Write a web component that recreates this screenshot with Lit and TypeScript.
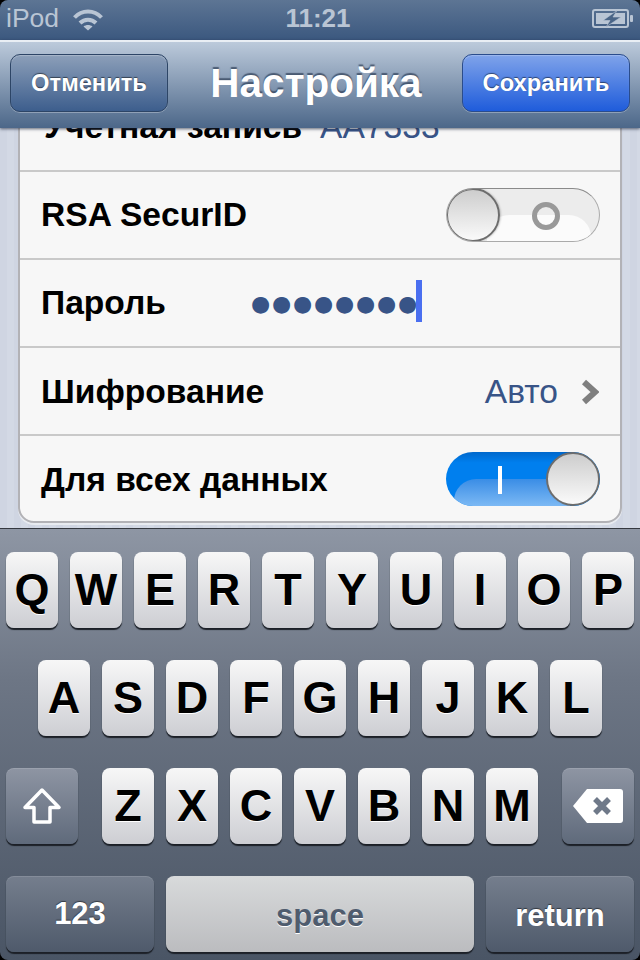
import { LitElement, html, css } from "lit";
import { customElement } from "lit/decorators.js";

@customElement("app-root")
class AppRoot extends LitElement {
  static styles = css`
    :host { display: block; width: 640px; height: 960px; background: #000; font-family: "Liberation Sans", Arial, sans-serif; }
    .screen { width: 640px; height: 960px; display: flex; flex-direction: column; overflow: hidden; border-radius: 8px; }
    .status { height: 40px; flex: none; box-sizing: border-box; display: flex; align-items: center; padding: 0 6px 3px; color: #b9c5d4; font-size: 26.5px; background: linear-gradient(#5d7594, #3b587f); }
    .carrier { width: 66px; }
    .wifi { width: 32px; height: 24px; }
    .time { flex: 1; text-align: center; font-weight: bold; font-size: 26px; padding-right: 60px; }
    .battery { width: 42px; height: 20px; }
    .nav { height: 88px; flex: none; box-sizing: border-box; border-top: 2px solid #e9eef4; padding: 12px 10px 0; display: flex; align-items: flex-start; justify-content: space-between; background: linear-gradient(#bccadb, #4c6789); box-shadow: 0 1px 3px rgba(30,40,60,.7); position: relative; z-index: 2; }
    .btn { height: 58px; box-sizing: border-box; display: flex; align-items: center; justify-content: center; border-radius: 10px; color: #fff; font-weight: bold; font-size: 23.7px; border: 1px solid #2d4566; box-shadow: 0 1px 0 rgba(255,255,255,.3), inset 0 1px 1px rgba(255,255,255,.25); text-shadow: 0 -1px 1px rgba(0,0,0,.5); }
    .cancel { width: 158px; background: linear-gradient(#8c9fb9, #3d5e8d); }
    .save { width: 168px; background: linear-gradient(#7fa3ea, #1f5cdb); border-color: #2a4c8c; }
    .title { color: #fff; font-weight: bold; font-size: 40.5px; line-height: 58px; margin-left: 2px; text-shadow: 0 -2px 1px rgba(50,65,90,.75); }
    .content { height: 400px; flex: none; overflow: hidden; box-sizing: border-box; padding: 0 18px; background: repeating-linear-gradient(90deg, #cfd5e2 0 7px, #d3d9e5 7px 14px); }
    .card { margin-top: -46px; height: 441px; box-sizing: border-box; background: #f7f7f7; border: 2px solid #b2b2b6; border-radius: 16px; box-shadow: 0 2px 0 #e8ebf0; }
    .row { height: 88px; box-sizing: border-box; padding: 0 20px 0 21px; display: flex; align-items: center; font-size: 33.6px; font-weight: bold; color: #000; border-bottom: 2px solid #c9c9c9; }
    .row:last-child { border-bottom: 0; height: 85px; }
    .row.first { padding-left: 24px; }
    .grow { flex: 1; }
    .nudge { margin-top: 2px; }
    .val { color: #385487; font-weight: normal; }
    .account { margin-left: 18px; }
    .pwlabel { width: 211px; }
    .dots { font-family: "DejaVu Sans", sans-serif; font-weight: normal; font-size: 22px; letter-spacing: 1.8px; color: #385487; line-height: 40px; height: 40px; margin: 2px 0 0 -1px; }
    .caret { width: 6px; height: 42px; background: #4a6ff0; margin: -4px 0 0 -3px; }
    .chev { width: 18px; height: 26px; margin: 2px 1px 0 23px; }
    .sw { width: 154px; height: 54px; border-radius: 27px; position: relative; overflow: hidden; box-sizing: border-box; flex: none; }
    .sw.off { background: #ececec; border: 1px solid #aaa; border-top-color: #8a8a8a; }
    .sw.on { background: linear-gradient(#0068cc, #007fee 20%); }
    .hl { position: absolute; left: 8px; right: 8px; bottom: 0; height: 27px; border-radius: 22px 22px 0 0; }
    .off .hl { left: 40px; height: 26px; background: #fbfbfb; }
    .on .hl { right: 30px; background: linear-gradient(#3a8de6, #7cb9f4); }
    .knob { position: absolute; top: 0; width: 54px; height: 54px; box-sizing: border-box; border-radius: 50%; border: 2px solid #6d6d6d; background: linear-gradient(#cdcdcd, #fafafa); box-shadow: 1px 0 2px rgba(0,0,0,.2); }
    .off .knob { left: -1px; top: -1px; }
    .on .knob { right: 0; }
    .o { position: absolute; left: 85px; top: 13px; width: 28px; height: 28px; box-sizing: border-box; border: 5px solid #999; border-radius: 50%; }
    .i { position: absolute; left: 52px; top: 14px; width: 4px; height: 28px; background: #fff; }
    .kb { flex: 1; box-sizing: border-box; border-top: 1px solid #34383f; padding: 23px 6px 0; display: flex; flex-direction: column; gap: 32px; background: linear-gradient(#8e96a4, #6d7685 35%, #4a5565); }
    .kr { display: flex; gap: 12px; height: 76px; flex: none; }
    .kr.center { justify-content: center; }
    .key { width: 52px; height: 76px; flex: none; box-sizing: border-box; display: flex; align-items: center; justify-content: center; border-radius: 8px; font-weight: bold; font-size: 45px; color: #000; background: linear-gradient(#f7f7f7, #cdced3); box-shadow: 0 2px 1px #1c2027; text-shadow: 0 1px 0 #fff; }
    .fn { background: linear-gradient(#8e95a3, #5f6a7b); color: #fff; font-size: 31px; text-shadow: 0 -1px 1px rgba(0,0,0,.5); box-shadow: 0 2px 1px #1c2027, inset 0 1px 0 rgba(255,255,255,.12); }
    .fn.low { background: linear-gradient(#757e8d, #4f5a6b); }
    .wide { width: 72px; }
    .mid { width: 148px; }
    .space { width: 308px; font-size: 31px; color: #4f5c6e; background: linear-gradient(#d8dadb, #bbbcbf); padding-top: 4px; }
    .ret { padding-top: 3px; }
    .sp24 { margin-left: 12px; margin-right: 12px; }
  `;

  private keys(s: string) {
    return [...s].map((c) => html`<div class="key">${c}</div>`);
  }

  render() {
    return html`
      <div class="screen">
        <div class="status">
          <span class="carrier">iPod</span>
          <svg class="wifi" viewBox="0 0 32 24" fill="none" stroke="#b9c5d4">
            <path d="M2.5 10.5C10 2.5 22 2.5 29.5 10.5" stroke-width="4"/>
            <path d="M8 16C12.5 11.5 19.500 11.500 24 16" stroke-width="4"/>
            <path d="M16 23.500L11.500 19.500C14 17.500 18 17.500 20.500 19.500Z" fill="#b9c5d4" stroke="none"/>
          </svg>
          <span class="time">11:21</span>
          <svg class="battery" viewBox="0 0 42 20">
            <rect x="1" y="1" width="35" height="17" rx="2" fill="none" stroke="#b9c5d4" stroke-width="2"/>
            <rect x="4" y="4" width="29" height="11" fill="#b9c5d4"/>
            <rect x="38" y="6" width="3" height="7" rx="1" fill="#b9c5d4"/>
            <path d="M25 1.500L11 11.500H18L14 18L29 8H21Z" fill="#4a6587" stroke="#b9c5d4" stroke-width=".6"/>
          </svg>
        </div>
        <div class="nav">
          <div class="btn cancel">Отменить</div>
          <div class="title">Настройка</div>
          <div class="btn save">Сохранить</div>
        </div>
        <div class="content">
          <div class="card">
            <div class="row first"><span>Учетная запись</span><span class="val account">AA7333</span></div>
            <div class="row"><span class="grow">RSA SecurID</span>
              <div class="sw off"><div class="hl"></div><div class="o"></div><div class="knob"></div></div></div>
            <div class="row"><span class="pwlabel">Пароль</span><span class="dots">●●●●●●●●</span><div class="caret"></div></div>
            <div class="row"><span class="grow nudge">Шифрование</span><span class="val nudge">Авто</span>
              <svg class="chev" viewBox="0 0 18 26"><path d="M3 3L14 13L3 23" fill="none" stroke="#7f7f7f" stroke-width="6"/></svg></div>
            <div class="row"><span class="grow nudge">Для всех данных</span>
              <div class="sw on"><div class="hl"></div><div class="i"></div><div class="knob"></div></div></div>
          </div>
        </div>
        <div class="kb">
          <div class="kr">${this.keys("QWERTYUIOP")}</div>
          <div class="kr center">${this.keys("ASDFGHJKL")}</div>
          <div class="kr">
            <div class="key fn wide">
              <svg width="42" height="38" viewBox="0 0 42 38"><path d="M21 3L38 20.500H29V35H13V20.500H4Z" fill="none" stroke="#fff" stroke-width="3.500" stroke-linejoin="round"/></svg>
            </div>
            <div class="kr sp24">${this.keys("ZXCVBNM")}</div>
            <div class="key fn wide">
              <svg width="50" height="34" viewBox="0 0 50 34"><path d="M14 0H47Q50 0 50 3V31Q50 34 47 34H14L0 17Z" fill="#fff"/><path d="M22 10L36 24M36 10L22 24" stroke="#6f7989" stroke-width="5.500"/></svg>
            </div>
          </div>
          <div class="kr">
            <div class="key fn low mid">123</div>
            <div class="key space">space</div>
            <div class="key fn low mid ret">return</div>
          </div>
        </div>
      </div>
    `;
  }
}
